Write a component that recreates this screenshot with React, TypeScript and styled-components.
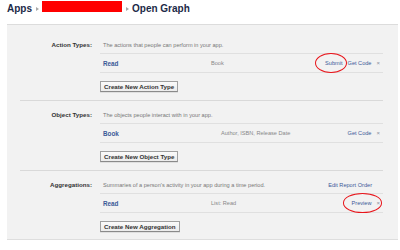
import React from "react";
import styled, { createGlobalStyle } from "styled-components";

const GlobalStyle = createGlobalStyle`
  body {
    margin: 0;
    background: #fff;
    font-family: "Liberation Sans", Arial, sans-serif;
  }
`;

const Page = styled.div`
  width: 400px;
  height: 250px;
  overflow: hidden;
`;

const TitleBar = styled.div`
  display: flex;
  align-items: center;
  height: 17px;
  padding: 0 0 0 7px;
  font-size: 10px;
  font-weight: bold;
  color: #1c2a47;
`;

const Crumb = styled.span`
  line-height: 17px;
`;

const Arrow = styled.span`
  width: 0;
  height: 0;
  margin: 0 3px 0 4px;
  border-left: 3px solid #a8a8a8;
  border-top: 2px solid transparent;
  border-bottom: 2px solid transparent;
`;

const Redacted = styled.span`
  width: 80px;
  height: 11px;
  background: #ff0000;
  margin-top: -4px;
`;

const Panel = styled.div`
  margin: 7px 2px 0 7px;
  padding: 6px 0 0;
  background: #f2f2f2;
  border-top: 1px solid #dcdcdc;
  border-bottom: 1px solid #dedede;
`;

const Section = styled.div`
  display: grid;
  grid-template-columns: 80px 1fr;
  margin: 0 15px 0 13px;
  padding: 5px 0 8px;

  & + & {
    border-top: 1px solid #d9d9d9;
  }
  &:last-child {
    padding-bottom: 7px;
  }
`;

const Label = styled.div`
  height: 17px;
  line-height: 18px;
  padding-right: 8px;
  text-align: right;
  font-size: 6.2px;
  font-weight: bold;
  color: #333;
`;

const Content = styled.div`
  display: flex;
  flex-direction: column;
  align-items: flex-start;
`;

const Header = styled.div`
  align-self: stretch;
  display: flex;
  justify-content: space-between;
  height: 17px;
  line-height: 18px;
  padding: 0 11px 0 3px;
  border-bottom: 1px solid #e0e0e0;
  font-size: 5.6px;
  color: #777;
`;

const Row = styled.div`
  align-self: stretch;
  display: flex;
  align-items: center;
  height: 18px;
  padding: 0 3px;
  border-bottom: 1px solid #e0e0e0;
  font-size: 5.6px;
`;

const Name = styled.a<{ $width: number }>`
  width: ${(p) => p.$width}px;
  font-size: 6.3px;
  font-weight: bold;
  color: #3b5998;
`;

const Detail = styled.span`
  flex: 1;
  color: #888;
`;

const Actions = styled.span`
  display: flex;
  align-items: center;
  gap: 5px;
`;

const Link = styled.a`
  color: #3b5998;
  text-decoration: none;
`;

const Remove = styled.span`
  color: #8a8fa0;
  font-size: 6px;
`;

const Circled = styled.span<{ $left: number; $right: number }>`
  position: relative;

  &::after {
    content: "";
    position: absolute;
    left: -${(p) => p.$left}px;
    right: -${(p) => p.$right}px;
    top: -7px;
    bottom: -7px;
    border: 1.5px solid #e8151b;
    border-radius: 50%;
  }
`;

const Button = styled.button`
  margin: 8px 0 0;
  height: 11px;
  padding: 0 3px;
  font-family: "Liberation Sans", Arial, sans-serif;
  font-size: 6.2px;
  font-weight: bold;
  color: #333;
  background: linear-gradient(#fafafa, #ececec);
  border: 1px solid #a0a0a0;
  border-bottom-color: #8a8a8a;
  box-shadow: 0 1px 0 rgba(0, 0, 0, 0.08);
  line-height: 9px;
`;

const App = () => {
  return (
    <Page>
      <GlobalStyle />
      <TitleBar>
        <Crumb>Apps</Crumb>
        <Arrow />
        <Redacted />
        <Arrow />
        <Crumb>Open Graph</Crumb>
      </TitleBar>
      <Panel>
        <Section>
          <Label>Action Types:</Label>
          <Content>
            <Header>
              <span>The actions that people can perform in your app.</span>
            </Header>
            <Row>
              <Name $width={108}>Read</Name>
              <Detail>Book</Detail>
              <Actions>
                <Circled $left={10} $right={4}>
                  <Link>Submit</Link>
                </Circled>
                <Link>Get Code</Link>
                <Remove>×</Remove>
              </Actions>
            </Row>
            <Button>Create New Action Type</Button>
          </Content>
        </Section>
        <Section>
          <Label>Object Types:</Label>
          <Content>
            <Header>
              <span>The objects people interact with in your app.</span>
            </Header>
            <Row>
              <Name $width={118}>Book</Name>
              <Detail>Author, ISBN, Release Date</Detail>
              <Actions>
                <Link>Get Code</Link>
                <Remove>×</Remove>
              </Actions>
            </Row>
            <Button>Create New Object Type</Button>
          </Content>
        </Section>
        <Section>
          <Label>Aggregations:</Label>
          <Content>
            <Header>
              <span>Summaries of a person's activity in your app during a time period.</span>
              <Link>Edit Report Order</Link>
            </Header>
            <Row>
              <Name $width={108}>Read</Name>
              <Detail>List: Read</Detail>
              <Actions>
                <Circled $left={9} $right={11}>
                  <Link>Preview</Link>
                </Circled>
                <Remove>×</Remove>
              </Actions>
            </Row>
            <Button>Create New Aggregation</Button>
          </Content>
        </Section>
      </Panel>
    </Page>
  );
};

export default App;
